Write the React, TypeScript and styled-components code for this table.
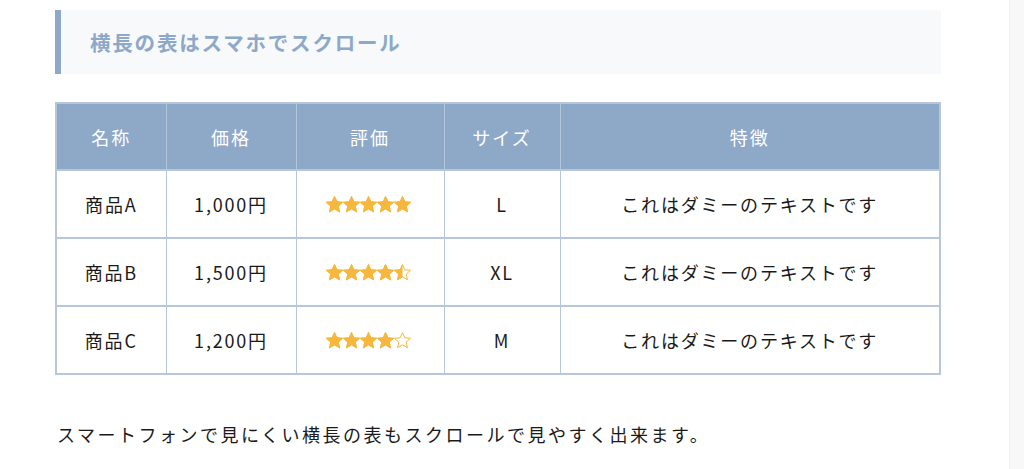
import React from "react";
import styled, { createGlobalStyle } from "styled-components";

const Global = createGlobalStyle`
  html, body { margin: 0; padding: 0; background: #fff; }
  body { font-family: "Noto Sans CJK JP", "Noto Sans", sans-serif; color: #1a1a1a; }
`;

const Page = styled.div`
  display: flex;
  width: 1024px;
  height: 469px;
  overflow: hidden;
`;

const Main = styled.main`
  flex: 1;
  padding: 10px 0 0 55px;
`;

const ScrollTrack = styled.div`
  width: 14px;
  background: #f8f8f8;
  border-left: 1px solid #f1f1f1;
`;

const Content = styled.div`
  width: 886px;
`;

const Heading = styled.h2`
  margin: 0;
  height: 64px;
  display: flex;
  align-items: center;
  box-sizing: border-box;
  padding-left: 29px;
  background: #f7f9fb;
  border-left: 6px solid #8ea8c8;
  color: #8ea8c8;
  font-size: 20.5px;
  font-weight: 700;
  letter-spacing: 1.8px;
`;

const Table = styled.table`
  margin-top: 28px;
  width: 886px;
  border-collapse: collapse;
  table-layout: fixed;
  border: 2px solid #b6c7dc;
`;

const Th = styled.th`
  height: 65px;
  background: #8ea8c8;
  color: #fff;
  font-weight: 400;
  font-size: 18px;
  letter-spacing: 2px;
  text-align: center;
  border: 1px solid #b6c7dc;
  padding: 0;
`;

const Td = styled.td`
  height: 66px;
  background: #fff;
  color: #1a1a1a;
  font-size: 18px;
  letter-spacing: 1.8px;
  text-align: center;
  border: 1px solid #b6c7dc;
  border-width: 2px 1px;
  padding: 0;
`;

const Stars = styled.div`
  display: flex;
  justify-content: center;
  margin-left: -3px;
`;

const Para = styled.p`
  margin: 46px 0 0 2px;
  font-size: 18px;
  letter-spacing: 2.5px;
  color: #1a1a1a;
`;

const STAR =
  "M8.5 0.6 L10.8 5.8 L16.5 6.3 L12.2 10.1 L13.5 15.8 L8.5 12.8 L3.5 15.8 L4.8 10.1 L0.5 6.3 L6.2 5.8 Z";

const Star: React.FC<{ fill: number; id: string }> = ({ fill, id }) => (
  <svg width="17" height="17" viewBox="0 0 17 17">
    <defs>
      <clipPath id={id}>
        <rect x="0" y="0" width={17 * fill} height="17" />
      </clipPath>
    </defs>
    <path d={STAR} fill="#fff" stroke="#f6b73c" strokeWidth="1" strokeLinejoin="round" />
    <path d={STAR} fill="#f6b73c" stroke="#f6b73c" strokeWidth="1" strokeLinejoin="round" clipPath={`url(#${id})`} />
  </svg>
);

const Rating: React.FC<{ value: number; name: string }> = ({ value, name }) => (
  <Stars>
    {[0, 1, 2, 3, 4].map((i) => (
      <Star key={i} id={`${name}-${i}`} fill={Math.max(0, Math.min(1, value - i))} />
    ))}
  </Stars>
);

const rows = [
  { name: "商品A", price: "1,000円", rating: 5, size: "L" },
  { name: "商品B", price: "1,500円", rating: 4.5, size: "XL" },
  { name: "商品C", price: "1,200円", rating: 4, size: "M" },
];

export default function App() {
  return (
    <Page>
      <Global />
      <Main>
        <Content>
          <Heading>横長の表はスマホでスクロール</Heading>
          <Table>
            <colgroup>
              <col style={{ width: 110 }} />
              <col style={{ width: 130 }} />
              <col style={{ width: 148 }} />
              <col style={{ width: 116 }} />
              <col />
            </colgroup>
            <thead>
              <tr>
                <Th>名称</Th>
                <Th>価格</Th>
                <Th>評価</Th>
                <Th>サイズ</Th>
                <Th>特徴</Th>
              </tr>
            </thead>
            <tbody>
              {rows.map((r, i) => (
                <tr key={r.name}>
                  <Td>{r.name}</Td>
                  <Td>{r.price}</Td>
                  <Td>
                    <Rating value={r.rating} name={`r${i}`} />
                  </Td>
                  <Td>{r.size}</Td>
                  <Td>これはダミーのテキストです</Td>
                </tr>
              ))}
            </tbody>
          </Table>
          <Para>スマートフォンで見にくい横長の表もスクロールで見やすく出来ます。</Para>
        </Content>
      </Main>
      <ScrollTrack />
    </Page>
  );
}
